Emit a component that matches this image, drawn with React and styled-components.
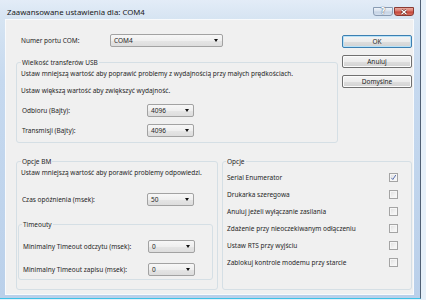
import React from 'react';
import styled, { createGlobalStyle, css } from 'styled-components';

const Global = createGlobalStyle`
  html, body { margin: 0; padding: 0; }
  body {
    width: 426px; height: 300px; overflow: hidden;
    background: #e6f0f9;
    font-family: "Noto Sans", "Open Sans", sans-serif;
    font-size: 6.5px;
    color: #262626;
  }
  * { box-sizing: border-box; }
`;

const Window = styled.div`
  width: 421px;
  height: 299px;
  display: flex;
  flex-direction: column;
  padding: 0 6px 3px 5px;
  border-right: 1px solid #4f6074;
  border-bottom: 1px solid #3fc2e6;
  background: linear-gradient(180deg, #e3ecf7 0px, #d6e4f2 19px, #c6d9ef 80px, #bad0ea 100%);
`;

const TitleBar = styled.div`
  height: 19px;
  display: flex;
  align-items: flex-start;
`;

const Title = styled.div`
  margin-top: 6px;
  padding-left: 2px;
  font-size: 7.8px;
  line-height: 12px;
  color: #1a1a1a;
`;

const Caption = styled.div`
  margin-left: auto;
  margin-top: 7px;
  display: flex;
  gap: 1px;
`;

const CapButton = styled.div`
  width: 20px;
  height: 9px;
  border-radius: 0 0 3px 3px;
  display: flex;
  align-items: center;
  justify-content: center;
  ${(p) =>
    p.$close
      ? css`
          border: 1px solid #8a3a33;
          background: linear-gradient(180deg, #e9a99e 0%, #d8766a 45%, #c5463a 55%, #d8705f 100%);
        `
      : css`
          border: 1px solid #8a9cb3;
          background: linear-gradient(180deg, #eef3f9 0%, #d8e2ee 45%, #c4d2e3 55%, #d4e0ee 100%);
        `}
`;

const HelpGlyph = styled.span`
  font-family: "DejaVu Sans", sans-serif;
  font-weight: bold;
  font-size: 8px;
  line-height: 8px;
  color: #ffffff;
  text-shadow: 0 0 1px #52647c, 0 0 1px #52647c;
`;

const Client = styled.div`
  flex: 1;
  display: flex;
  flex-direction: column;
  padding: 14px 1px 4px 10px;
  background: #f0f0f0;
  border: 1px solid #f8fafc;
`;

const TopRow = styled.div`
  display: grid;
  grid-template-columns: 322px 70px;
  column-gap: 4px;
  align-items: start;
`;

const LeftCol = styled.div`
  display: flex;
  flex-direction: column;
`;

const FieldRow = styled.div`
  display: flex;
  align-items: center;
  height: 13px;
  padding-left: ${(p) => p.$pad ?? 5}px;
  margin-top: ${(p) => p.$mt ?? 0}px;
`;

const FieldLabel = styled.div`
  width: ${(p) => p.$w}px;
  flex: none;
  white-space: nowrap;
`;

const ComboBox = styled.div`
  width: ${(p) => p.$w}px;
  height: 13px;
  display: flex;
  align-items: center;
  padding: 0 0 0 3px;
  border: 1px solid #a2a2a2;
  border-radius: 2px;
  background: linear-gradient(180deg, #f7f7f7 0%, #efefef 50%, #e5e5e5 51%, #dddddd 100%);
  white-space: nowrap;
`;

const ComboArrow = styled.span`
  margin-left: auto;
  margin-right: 4px;
  width: 0;
  height: 0;
  border-left: 2.5px solid transparent;
  border-right: 2.5px solid transparent;
  border-top: 3px solid #111;
`;

const Group = styled.div`
  display: flex;
  flex-direction: column;
  border: 1px solid #d5dfe5;
  border-radius: 3px;
  padding: 0 0 ${(p) => p.$pb ?? 0}px 0;
  margin: ${(p) => p.$mt ?? 0}px ${(p) => p.$mr ?? 0}px 0 ${(p) => p.$ml ?? 0}px;
`;

const GroupTitle = styled.div`
  align-self: flex-start;
  margin: -6px 0 0 ${(p) => p.$x}px;
  padding: 0 1px;
  height: 11px;
  line-height: 11px;
  background: #f0f0f0;
  white-space: nowrap;
`;

const Note = styled.div`
  height: 10px;
  line-height: 10px;
  padding-left: 4px;
  margin-top: ${(p) => p.$mt ?? 0}px;
  white-space: nowrap;
`;

const ButtonCol = styled.div`
  display: flex;
  flex-direction: column;
  gap: 7px;
  padding-top: 1px;
`;

const Button = styled.div`
  height: 13px;
  display: flex;
  align-items: center;
  justify-content: center;
  border: 1px solid ${(p) => (p.$default ? '#3c7fb1' : '#707070')};
  border-radius: 2px;
  background: linear-gradient(180deg, #f4f4f4 0%, #ececec 50%, #dedede 51%, #d2d2d2 100%);
  box-shadow: inset 0 0 0 1px ${(p) => (p.$default ? '#b8e2f8' : '#fbfbfb')};
`;

const BottomRow = styled.div`
  flex: 1;
  display: grid;
  grid-template-columns: 202px 190px;
  column-gap: 4px;
  margin-top: 18px;
`;

const OptionList = styled.div`
  display: flex;
  flex-direction: column;
  margin-top: 2px;
`;

const OptionRow = styled.div`
  height: 17px;
  display: flex;
  align-items: center;
  justify-content: space-between;
  padding: 0 13px 0 4px;
  white-space: nowrap;
`;

const CheckBox = styled.div`
  width: 9px;
  height: 9px;
  flex: none;
  display: flex;
  align-items: center;
  justify-content: center;
  border: 1px solid #a4a4a4;
  background: linear-gradient(135deg, #dedede 0%, #f2f2f2 60%, #fbfbfb 100%);
  box-shadow: inset 0 0 0 1px #f6f6f6;
`;

function Combo({ w, value }) {
  return (
    <ComboBox $w={w}>
      {value}
      <ComboArrow />
    </ComboBox>
  );
}

function Check({ checked }) {
  return (
    <CheckBox>
      {checked && (
        <svg width="7" height="7" viewBox="0 0 7 7">
          <path d="M1.3 3.8 L2.8 5.5 L5.8 1" fill="none" stroke="#4a63a8" strokeWidth="0.9" />
        </svg>
      )}
    </CheckBox>
  );
}

const options = [
  ['Serial Enumerator', true],
  ['Drukarka szeregowa', false],
  ['Anuluj jeżeli wyłączanie zasilania', false],
  ['Zdażenie przy nieoczekiwanym odłączeniu', false],
  ['Ustaw RTS przy wyjściu', false],
  ['Zablokuj kontrole modemu przy starcie', false],
];

export default function App() {
  return (
    <>
      <Global />
      <Window>
        <TitleBar>
          <Title>Zaawansowane ustawienia dla: COM4</Title>
          <Caption>
            <CapButton>
              <HelpGlyph>?</HelpGlyph>
            </CapButton>
            <CapButton $close>
              <svg width="8" height="6" viewBox="0 0 8 6">
                <path d="M1.5 0.8 L6.5 5.2 M6.5 0.8 L1.5 5.2" stroke="#5b1d17" strokeWidth="2.4" />
                <path d="M1.5 0.8 L6.5 5.2 M6.5 0.8 L1.5 5.2" stroke="#ffffff" strokeWidth="1.3" />
              </svg>
            </CapButton>
          </Caption>
        </TitleBar>
        <Client>
          <TopRow>
            <LeftCol>
              <FieldRow>
                <FieldLabel $w={89}>Numer portu COM:</FieldLabel>
                <Combo w={113} value="COM4" />
              </FieldRow>
              <Group $mt={15} $pb={5}>
                <GroupTitle $x={4}>Wielkość transferów USB</GroupTitle>
                <Note $mt={1}>
                  Ustaw mniejszą wartość aby poprawić problemy z wydajnością przy małych prędkościach.
                </Note>
                <Note $mt={7}>Ustaw większą wartość aby zwiększyć wydajność.</Note>
                <FieldRow $mt={8}>
                  <FieldLabel $w={125}>Odbioru (Bajty):</FieldLabel>
                  <Combo w={47} value="4096" />
                </FieldRow>
                <FieldRow $mt={7}>
                  <FieldLabel $w={125}>Transmisji (Bajty):</FieldLabel>
                  <Combo w={47} value="4096" />
                </FieldRow>
              </Group>
            </LeftCol>
            <ButtonCol>
              <Button $default>OK</Button>
              <Button>Anuluj</Button>
              <Button>Domyślne</Button>
            </ButtonCol>
          </TopRow>
          <BottomRow>
            <Group>
              <GroupTitle $x={4}>Opcje BM</GroupTitle>
              <Note $mt={1}>Ustaw mniejszą wartość aby porawić problemy odpowiedzi.</Note>
              <FieldRow $mt={15}>
                <FieldLabel $w={125}>Czas opóźnienia (msek):</FieldLabel>
                <Combo w={47} value="50" />
              </FieldRow>
              <Group $mt={18} $ml={1} $mr={4} $pb={3}>
                <GroupTitle $x={3}>Timeouty</GroupTitle>
                <FieldRow $mt={10} $pad={4}>
                  <FieldLabel $w={125}>Minimalny Timeout odczytu (msek):</FieldLabel>
                  <Combo w={47} value="0" />
                </FieldRow>
                <FieldRow $mt={10} $pad={4}>
                  <FieldLabel $w={125}>Minimalny Timeout zapisu (msek):</FieldLabel>
                  <Combo w={47} value="0" />
                </FieldRow>
              </Group>
            </Group>
            <Group>
              <GroupTitle $x={3}>Opcje</GroupTitle>
              <OptionList>
                {options.map(([label, checked]) => (
                  <OptionRow key={label}>
                    {label}
                    <Check checked={checked} />
                  </OptionRow>
                ))}
              </OptionList>
            </Group>
          </BottomRow>
        </Client>
      </Window>
    </>
  );
}
